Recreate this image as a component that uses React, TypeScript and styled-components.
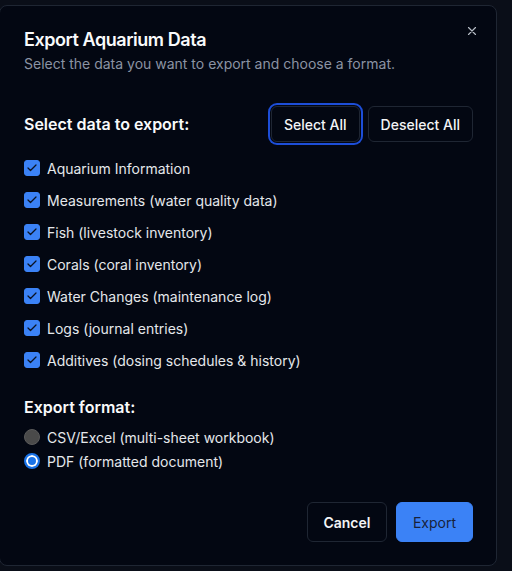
import React, { useState } from "react";
import styled, { createGlobalStyle } from "styled-components";

const Global = createGlobalStyle`
  html, body { margin: 0; padding: 0; background: #0a0e18; }
  body { font-family: Inter, "Noto Sans", sans-serif; color: #f9fafb; }
  * { box-sizing: border-box; }
`;

const Page = styled.div`
  width: 512px;
  height: 571px;
  padding-top: 5px;
  overflow: hidden;
  background: #0a0e18;
`;

const Dialog = styled.div`
  position: relative;
  margin-left: -1px;
  width: 498px;
  height: 561px;
  background: #030712;
  border: 1px solid #1f2633;
  border-radius: 8px;
  padding: 20px 23px 23px 24px;
  display: flex;
  flex-direction: column;
`;

const Close = styled.button`
  position: absolute;
  top: 17px;
  right: 16px;
  width: 16px;
  height: 16px;
  padding: 0;
  background: none;
  border: none;
  color: #b7bcc6;
  display: flex;
  align-items: center;
  justify-content: center;
`;

const Title = styled.h2`
  margin: 0;
  font-size: 18px;
  line-height: 28px;
  font-weight: 600;
  letter-spacing: -0.45px;
  color: #f9fafb;
`;

const Subtitle = styled.p`
  margin: 0;
  font-size: 14px;
  line-height: 20px;
  color: #8b93a3;
`;

const SectionHead = styled.div`
  margin-top: 32px;
  display: flex;
  align-items: center;
  justify-content: space-between;
`;

const SectionTitle = styled.h3`
  margin: 0;
  font-size: 16px;
  line-height: 24px;
  font-weight: 600;
  color: #f9fafb;
`;

const Buttons = styled.div`
  display: flex;
  gap: 8px;
`;

const OutlineBtn = styled.button<{ $focused?: boolean }>`
  height: 36px;
  padding: 0 12px;
  border-radius: 6px;
  background: #030712;
  border: 1px solid #1f2633;
  color: #f3f4f6;
  font-family: Inter, "Noto Sans", sans-serif;
  font-size: 14px;
  font-weight: 500;
  box-shadow: ${(p) => (p.$focused ? "0 0 0 1px #030712, 0 0 0 3px #1d4ed8" : "none")};
`;

const List = styled.div`
  margin-top: 14px;
  display: flex;
  flex-direction: column;
  gap: 8px;
`;

const Row = styled.label`
  display: flex;
  align-items: center;
  gap: 7px;
  height: 24px;
  font-size: 14px;
  color: #e5e7eb;
`;

const Box = styled.span<{ $on: boolean }>`
  width: 16px;
  height: 16px;
  border-radius: 3px;
  background: ${(p) => (p.$on ? "#3b82f6" : "transparent")};
  border: 1px solid #3b82f6;
  display: flex;
  align-items: center;
  justify-content: center;
  flex-shrink: 0;
`;

const FormatTitle = styled(SectionTitle)`
  margin-top: 23px;
`;

const RadioList = styled.div`
  margin-top: 6px;
  display: flex;
  flex-direction: column;
`;

const RadioRow = styled.label`
  display: flex;
  align-items: center;
  gap: 7px;
  height: 24px;
  font-size: 14px;
  color: #e5e7eb;
`;

const Radio = styled.span<{ $on: boolean }>`
  width: 16px;
  height: 16px;
  border-radius: 50%;
  flex-shrink: 0;
  background: ${(p) => (p.$on ? "#1a73e8" : "#4a4a4a")};
  border: ${(p) => (p.$on ? "2px solid #1a73e8" : "1px solid #5a5a5a")};
  box-shadow: ${(p) => (p.$on ? "inset 0 0 0 2px #ffffff" : "none")};
`;

const Footer = styled.div`
  margin-top: auto;
  display: flex;
  justify-content: flex-end;
  gap: 9px;
`;

const FooterBtn = styled.button<{ $primary?: boolean }>`
  height: 40px;
  padding: 0 ${(p) => (p.$primary ? "16px" : "15.5px")};
  border-radius: 6px;
  font-family: Inter, "Noto Sans", sans-serif;
  font-size: 14px;
  font-weight: ${(p) => (p.$primary ? 400 : 600)};
  background: ${(p) => (p.$primary ? "#3b82f6" : "#030712")};
  color: ${(p) => (p.$primary ? "#18223a" : "#f3f4f6")};
  border: 1px solid ${(p) => (p.$primary ? "#3b82f6" : "#1f2633")};
`;

const Check = () => (
  <svg width="12" height="12" viewBox="0 0 24 24" fill="none" stroke="#0b1220" strokeWidth="2.5" strokeLinecap="round" strokeLinejoin="round">
    <path d="M20 6 9 17l-5-5" />
  </svg>
);

const items = [
  "Aquarium Information",
  "Measurements (water quality data)",
  "Fish (livestock inventory)",
  "Corals (coral inventory)",
  "Water Changes (maintenance log)",
  "Logs (journal entries)",
  "Additives (dosing schedules & history)",
];

export default function App() {
  const [checked, setChecked] = useState<boolean[]>(items.map(() => true));
  const [format, setFormat] = useState<"csv" | "pdf">("pdf");
  return (
    <Page>
      <Global />
      <Dialog>
        <Close aria-label="Close">
          <svg width="14" height="14" viewBox="0 0 24 24" fill="none" stroke="currentColor" strokeWidth="2" strokeLinecap="round">
            <path d="M18 6 6 18M6 6l12 12" />
          </svg>
        </Close>
        <Title>Export Aquarium Data</Title>
        <Subtitle>Select the data you want to export and choose a format.</Subtitle>
        <SectionHead>
          <SectionTitle>Select data to export:</SectionTitle>
          <Buttons>
            <OutlineBtn $focused onClick={() => setChecked(items.map(() => true))}>Select All</OutlineBtn>
            <OutlineBtn onClick={() => setChecked(items.map(() => false))}>Deselect All</OutlineBtn>
          </Buttons>
        </SectionHead>
        <List>
          {items.map((it, i) => (
            <Row key={it} onClick={() => setChecked(checked.map((c, j) => (j === i ? !c : c)))}>
              <Box $on={checked[i]}>{checked[i] && <Check />}</Box>
              {it}
            </Row>
          ))}
        </List>
        <FormatTitle>Export format:</FormatTitle>
        <RadioList>
          <RadioRow onClick={() => setFormat("csv")}>
            <Radio $on={format === "csv"} />
            CSV/Excel (multi-sheet workbook)
          </RadioRow>
          <RadioRow onClick={() => setFormat("pdf")}>
            <Radio $on={format === "pdf"} />
            PDF (formatted document)
          </RadioRow>
        </RadioList>
        <Footer>
          <FooterBtn>Cancel</FooterBtn>
          <FooterBtn $primary>Export</FooterBtn>
        </Footer>
      </Dialog>
    </Page>
  );
}
